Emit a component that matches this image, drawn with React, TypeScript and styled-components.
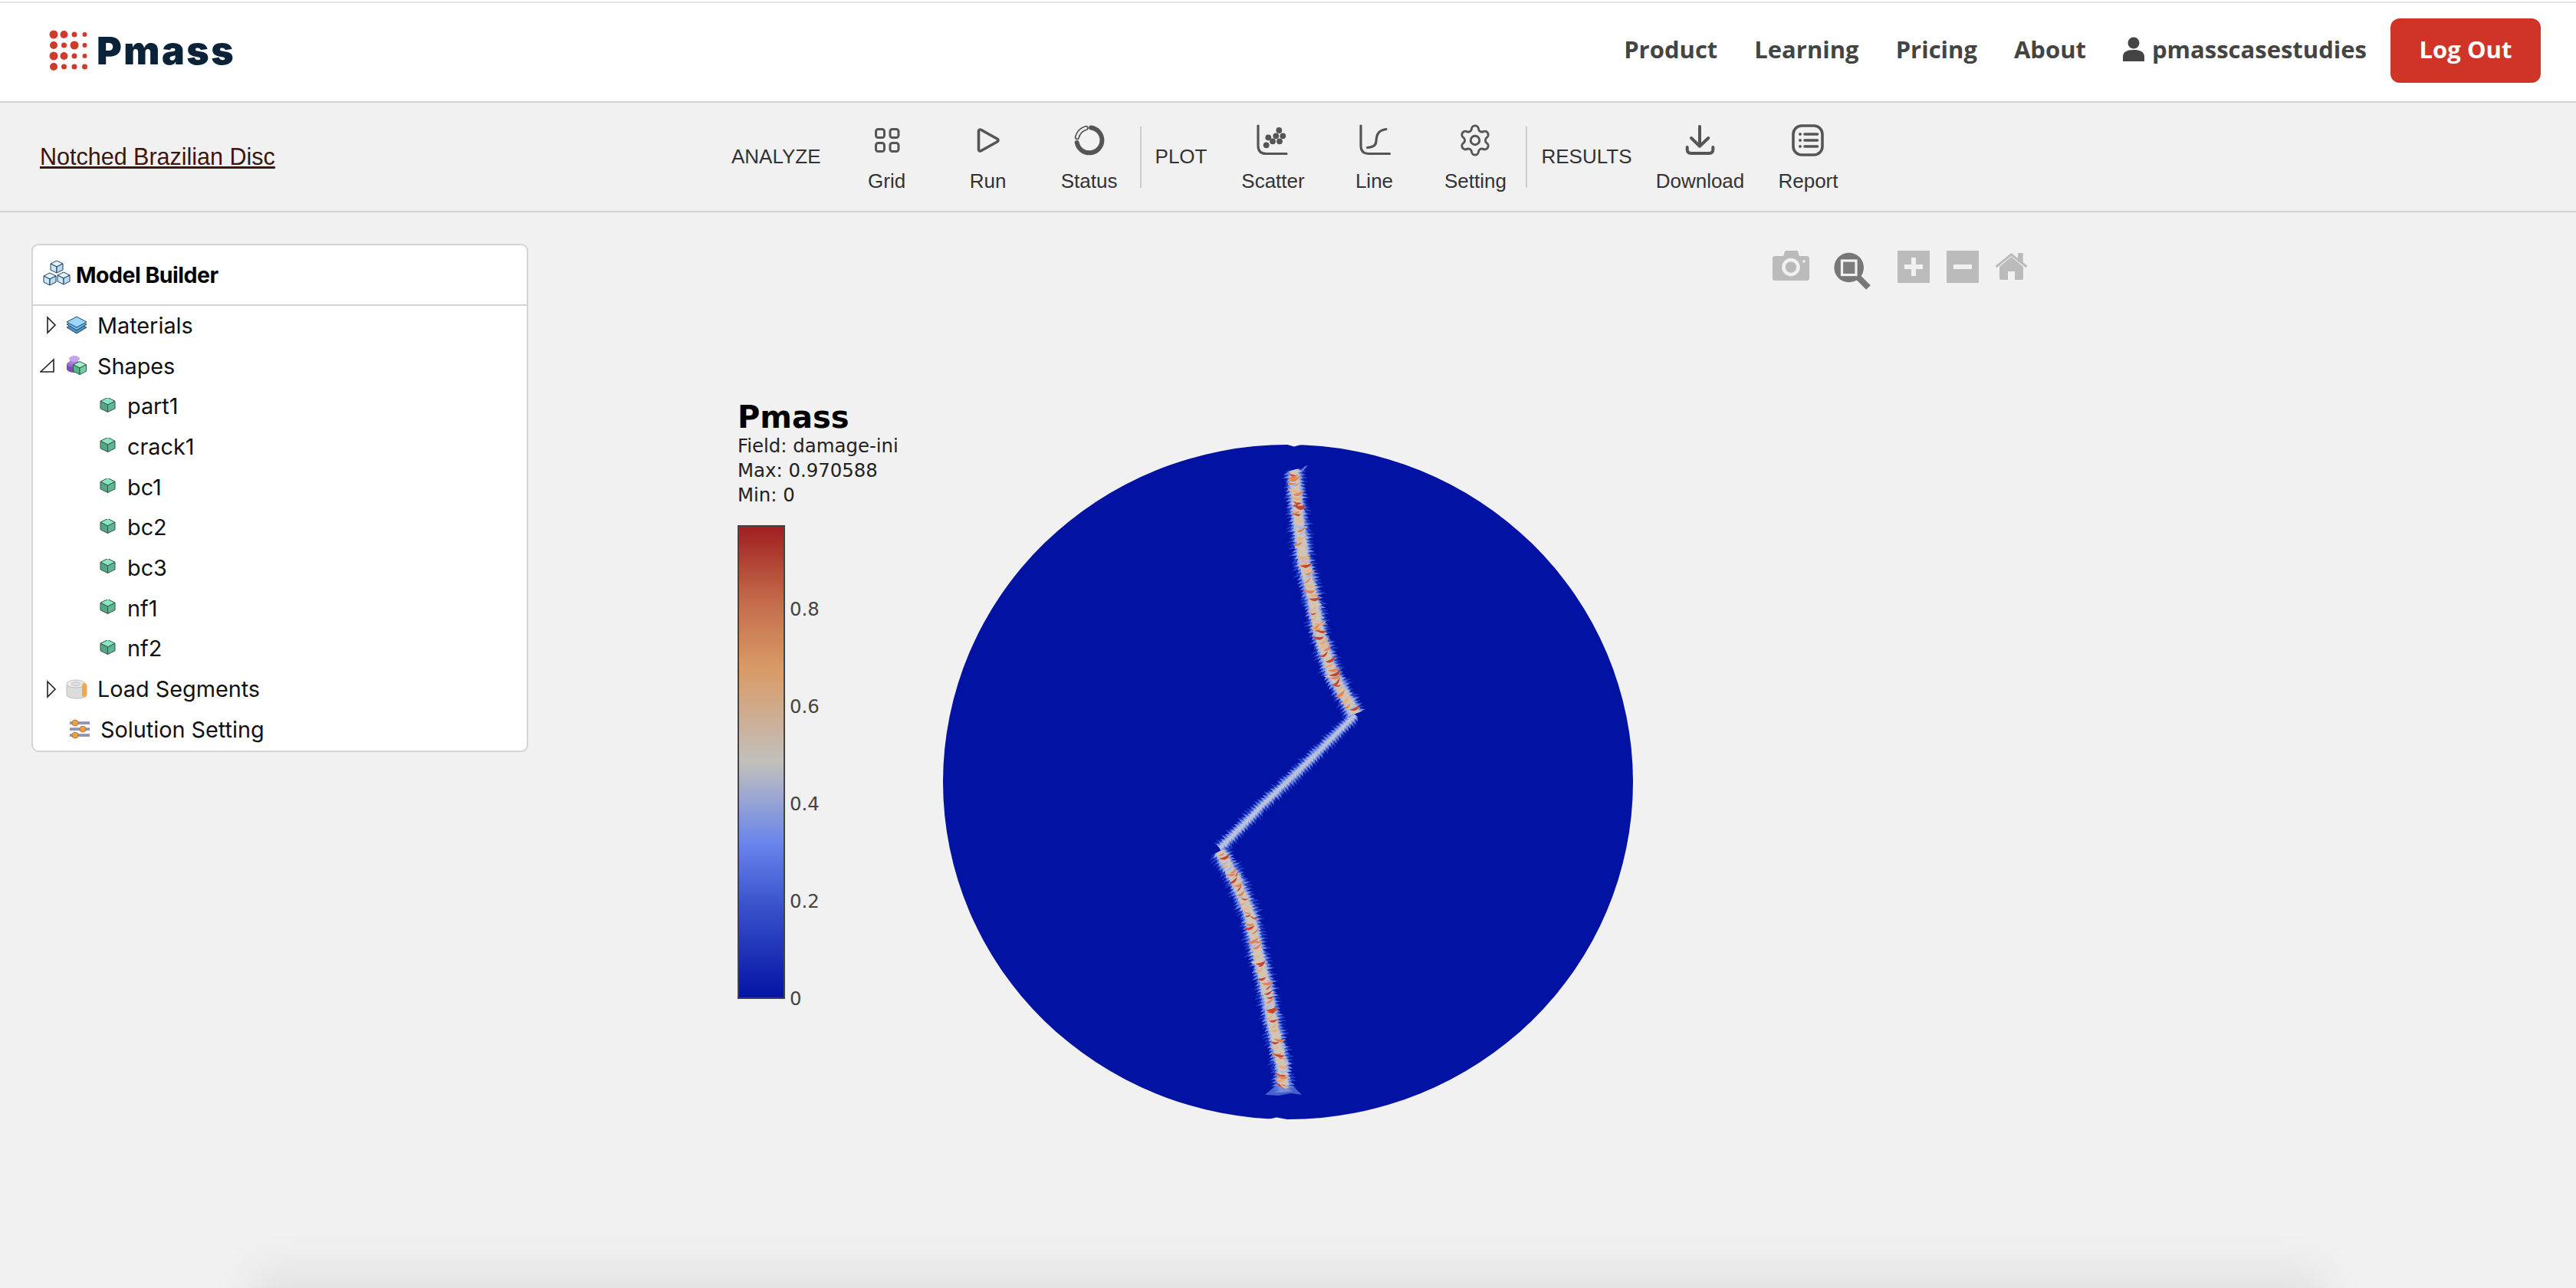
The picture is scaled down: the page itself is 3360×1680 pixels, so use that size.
import React from "react";
import styled, { createGlobalStyle } from "styled-components";
import { Settings } from "lucide-react";

const GlobalStyle = createGlobalStyle`
  html, body {
    margin: 0;
    padding: 0;
    background: #f1f1f1;
    overflow: hidden;
  }
`;

const Page = styled.div`
  min-height: 100vh;
  display: flex;
  flex-direction: column;
  padding-top: 2px;
  background: #f1f1f1;
  box-sizing: border-box;
  box-shadow: inset 0 2px 0 #fff;
`;

const Header = styled.header`
  height: 124px;
  border-top: 2px solid #e4e4e4;
  border-bottom: 2px solid #d2d2d2;
  background: #fff;
  display: flex;
  align-items: center;
  justify-content: space-between;
  padding: 0 46px 4px 64px;
`;

const Brand = styled.div`
  display: flex;
  align-items: center;
  gap: 12px;
`;

const BrandName = styled.span`
  font-family: Inter, sans-serif;
  font-weight: 900;
  font-size: 50px;
  letter-spacing: 2.5px;
  color: #0b2338;
`;

const Nav = styled.nav`
  display: flex;
  align-items: center;
  gap: 48px;
  font-family: "Open Sans", sans-serif;
  font-weight: 700;
  font-size: 31px;
  color: #444;
`;

const NavLink = styled.span`
  padding-bottom: 4px;
`;

const UserLink = styled.span`
  display: flex;
  align-items: center;
  gap: 10px;
  padding-bottom: 4px;
`;

const LogOut = styled.button`
  width: 196px;
  height: 84px;
  margin-left: -17px;
  padding: 0 0 4px;
  border: none;
  border-radius: 12px;
  background: #d03427;
  color: #fff;
  font-family: "Open Sans", sans-serif;
  font-weight: 700;
  font-size: 31px;
`;

const Toolbar = styled.div`
  height: 141px;
  border-bottom: 2px solid #d2d2d2;
  display: flex;
  align-items: center;
  padding-left: 52px;
  font-family: "Liberation Sans", sans-serif;
`;

const ProjectTitle = styled.a`
  width: 902px;
  flex: none;
  font-size: 30.5px;
  color: #3d1410;
  text-decoration: underline;
`;

const SectionLabel = styled.span`
  font-size: 26px;
  color: #333;
  margin-right: 20px;
`;

const ToolItem = styled.div<{ $width?: number }>`
  width: ${(p) => p.$width ?? 132}px;
  display: flex;
  flex-direction: column;
  align-items: center;
  flex: none;
`;

const ToolIcon = styled.svg`
  display: block;
  width: 48px;
  height: 48px;
  fill: none;
  stroke: #555;
  stroke-linecap: round;
  stroke-linejoin: round;
`;

const GearSlot = styled.div`
  width: 48px;
  height: 48px;
  display: flex;
  align-items: center;
  justify-content: center;
  color: #555;
`;

const ToolLabel = styled.span`
  margin-top: 14px;
  font-size: 26px;
  line-height: 30px;
  color: #333;
`;

const Divider = styled.div`
  width: 2px;
  height: 80px;
  background: #cdcdcd;
  margin-right: 18px;
`;

const Main = styled.main`
  flex: 1;
  display: flex;
  align-items: flex-start;
  padding: 41px 0 0 41px;
`;

const Panel = styled.aside`
  width: 648px;
  flex: none;
  box-sizing: border-box;
  border: 2px solid #d4d4d4;
  border-radius: 9px;
  background: #fff;
  font-family: Inter, sans-serif;
`;

const PanelHeader = styled.div`
  height: 77px;
  border-bottom: 2px solid #d4d4d4;
  display: flex;
  align-items: center;
  gap: 6px;
  padding-left: 13px;
  font-weight: 700;
  font-size: 28.5px;
  letter-spacing: -0.5px;
  color: #000;
`;

const TreeRow = styled.div<{ $indent: number; $gap: number }>`
  height: 52.7px;
  box-sizing: border-box;
  padding-bottom: 2px;
  display: flex;
  align-items: center;
  gap: ${(p) => p.$gap}px;
  padding-left: ${(p) => p.$indent}px;
  font-size: 28.8px;
  color: #111;
`;

const Caret = styled.svg`
  display: block;
  width: 22px;
  height: 24px;
  margin-right: -1px;
  flex: none;
`;

const PlotArea = styled.section`
  position: relative;
  flex: 1;
  display: flex;
  align-items: flex-start;
  padding-left: 273px;
`;

const Modebar = styled.div`
  position: absolute;
  top: 9px;
  left: 1623px;
  display: flex;
  align-items: flex-start;
`;

const ModeSlot = styled.div<{ $gap: number; $drop?: number }>`
  margin-left: ${(p) => p.$gap}px;
  margin-top: ${(p) => p.$drop ?? 0}px;
  display: flex;
`;

const Legend = styled.div`
  width: 266px;
  flex: none;
  margin-top: 204px;
  font-family: "DejaVu Sans", sans-serif;
`;

const LegendTitle = styled.div`
  font-weight: 700;
  font-size: 40px;
  line-height: 44px;
  color: #000;
`;

const LegendLine = styled.div`
  font-size: 24.4px;
  line-height: 32px;
  color: #222;
`;

const Scale = styled.div`
  display: flex;
  margin-top: 22.5px;
  gap: 6px;
`;

const ColorBar = styled.div`
  width: 62px;
  height: 618px;
  box-sizing: border-box;
  border: 2px solid #444;
  background: linear-gradient(
    to top,
    #0414a4 0%,
    #3a54cc 20%,
    #6a86ec 33%,
    #c2c0bc 50%,
    #d99a66 70%,
    #c46c4c 84%,
    #a01f20 100%
  );
`;

const Ticks = styled.div`
  padding-top: 46px;
  height: 508px;
`;

const Tick = styled.div`
  height: 127px;
  display: flex;
  align-items: center;
  font-size: 24.4px;
  color: #444;
`;

const Disc = styled.svg`
  display: block;
  flex: none;
  width: 904px;
  height: 884px;
  margin-top: 260px;
`;

const BottomShade = styled.div`
  position: fixed;
  left: 350px;
  right: 350px;
  bottom: -40px;
  height: 40px;
  box-shadow: 0 0 60px 22px rgba(0, 0, 0, 0.07);
`;

// logo dots: radius per column, row by row
const LOGO_R = [
  [5.5, 5, 3.5, 3],
  [5, 3.5, 5.5, 3],
  [5.5, 5, 3.5, 3],
  [5, 3.5, 3.5, 3.5],
];

const Logo = () => (
  <svg width="50" height="54" viewBox="0 0 50 54">
    {LOGO_R.map((row, r) =>
      row.map((rad, c) => (
        <circle key={`${r}-${c}`} cx={6 + c * 13.5} cy={6 + r * 14} r={rad} fill="#d03a2a" />
      ))
    )}
  </svg>
);

const GridIcon = () => (
  <ToolIcon viewBox="0 0 48 48" strokeWidth={3}>
    <rect x="9.5" y="9.5" width="11" height="11" rx="3" />
    <rect x="28" y="9.5" width="11" height="11" rx="3" />
    <rect x="9.5" y="27.5" width="11" height="11" rx="3" />
    <rect x="28" y="27.5" width="11" height="11" rx="3" />
  </ToolIcon>
);

const RunIcon = () => (
  <ToolIcon viewBox="0 0 48 48" strokeWidth={3.6}>
    <path d="M11.5 12c0-1.6 1.6-2.5 3-1.7l21.5 12c1.3.8 1.3 2.6 0 3.4l-21.5 12c-1.4.8-3-.1-3-1.7z" />
  </ToolIcon>
);

const StatusIcon = () => (
  <ToolIcon viewBox="0 0 48 48">
    <path d="M26 7.5A16.5 16.5 0 1 1 7.7 27" strokeWidth={6} />
    <path d="M8 20A16.5 16.5 0 0 1 19.5 8" strokeWidth={6.5} />
    <path d="M8 20A16.5 16.5 0 0 1 19.5 8" strokeWidth={3} stroke="#f1f1f1" />
  </ToolIcon>
);

const ScatterIcon = () => (
  <ToolIcon viewBox="0 0 48 48" strokeWidth={3.2}>
    <path d="M5 5V31Q5 41.5 15.5 41.5H42" />
    {[
      [32.3, 11],
      [18.3, 20.3],
      [28.3, 18.3],
      [37.3, 18.3],
      [24, 25.3],
      [33, 25.3],
      [15.7, 30.3],
    ].map(([cx, cy]) => (
      <circle key={`${cx}-${cy}`} cx={cx} cy={cy} r="3.9" fill="#555" stroke="none" />
    ))}
  </ToolIcon>
);

const LineIcon = () => (
  <ToolIcon viewBox="0 0 48 48" strokeWidth={3.2}>
    <path d="M7 5V31Q7 41.5 17.5 41.5H44.5" />
    <path d="M15.5 33.5C23 33 26.5 31 27 25C27.5 16 30 11 40 9.5" />
  </ToolIcon>
);

const DownloadIcon = () => (
  <ToolIcon viewBox="0 0 48 48" strokeWidth={4}>
    <path d="M24 6V31M13 21L24 31.7L35.3 21" />
    <path d="M7.7 33V36Q7.7 41 13 41H36.3Q41.3 41 41.3 36V33" />
  </ToolIcon>
);

const ReportIcon = () => (
  <ToolIcon viewBox="0 0 48 48" strokeWidth={3.6}>
    <rect x="5" y="5" width="38" height="38" rx="11" />
    <path d="M20 16H36.5M20 24H36.5M20 32H36.5" />
    <circle cx="14" cy="16" r="1.7" fill="#555" strokeWidth={0.5} />
    <circle cx="14" cy="24" r="1.7" fill="#555" strokeWidth={0.5} />
    <circle cx="14" cy="32" r="1.7" fill="#555" strokeWidth={0.5} />
  </ToolIcon>
);

const UserIcon = () => (
  <svg width="28" height="32" viewBox="0 0 28 32">
    <circle cx="14" cy="8" r="7.5" fill="#444" />
    <path d="M0 32V26C0 20 5 17 14 17S28 20 28 26V32Z" fill="#444" />
  </svg>
);

const CaretRight = () => (
  <Caret viewBox="0 0 22 24">
    <path d="M10 2L20 12L10 22Z" fill="none" stroke="#222" strokeWidth="1.6" />
  </Caret>
);

const CaretOpen = () => (
  <Caret viewBox="0 0 22 24">
    <path d="M1 20H18V4Z" fill="none" stroke="#222" strokeWidth="1.6" />
  </Caret>
);

// one isometric cube drawn around (x, y)
const IsoCube = ({ x, y, s, top, left, right, stroke }: { x: number; y: number; s: number; top: string; left: string; right: string; stroke: string }) => (
  <g strokeLinejoin="round" stroke={stroke} strokeWidth={1}>
    <path d={`M${x} ${y - s}L${x + s} ${y - s / 2}L${x} ${y}L${x - s} ${y - s / 2}Z`} fill={top} />
    <path d={`M${x - s} ${y - s / 2}L${x} ${y}V${y + s}L${x - s} ${y + s / 2}Z`} fill={left} />
    <path d={`M${x + s} ${y - s / 2}L${x} ${y}V${y + s}L${x + s} ${y + s / 2}Z`} fill={right} />
  </g>
);

const BuilderIcon = () => (
  <svg width="37" height="37" viewBox="0 0 37 37">
    <IsoCube x={18} y={8} s={8} top="#e3f3fc" left="#cbe7f8" right="#b5dcf4" stroke="#1d3d56" />
    <IsoCube x={9} y={24} s={8} top="#e3f3fc" left="#cbe7f8" right="#b5dcf4" stroke="#1d3d56" />
    <IsoCube x={27} y={23} s={8} top="#e3f3fc" left="#cbe7f8" right="#b5dcf4" stroke="#1d3d56" />
  </svg>
);

const ItemCube = () => (
  <svg width="21" height="22" viewBox="0 0 21 22">
    <IsoCube x={10.5} y={9} s={9.5} top="#86e6bf" left="#50a985" right="#5cb892" stroke="#37524a" />
  </svg>
);

const MaterialsIcon = () => (
  <svg width="28" height="24" viewBox="0 0 28 24">
    <path d="M14 9L27 15L14 23L1 15Z" fill="#4d93c9" stroke="#22475f" />
    <path d="M14 5L27 11L14 19L1 11Z" fill="#69b4e4" stroke="#22475f" />
    <path d="M14 1L27 8L14 15L1 8Z" fill="#9ad6fb" stroke="#22475f" />
  </svg>
);

const ShapesIcon = () => (
  <svg width="28" height="28" viewBox="0 0 28 28">
    <ellipse cx="10" cy="18" rx="9" ry="5" fill="#7b4bb0" />
    <rect x="1" y="12" width="18" height="7" fill="#7b4bb0" />
    <ellipse cx="10" cy="12" rx="9" ry="4" fill="#9a6ccc" />
    <rect x="5" y="5" width="11" height="7" fill="#a981d6" />
    <ellipse cx="11" cy="5" rx="7" ry="4" fill="#c4a4e8" />
    <IsoCube x={18} y={17} s={8.5} top="#a8efcb" left="#52b886" right="#6fd09f" stroke="#2f5a48" />
  </svg>
);

const LoadIcon = () => (
  <svg width="28" height="26" viewBox="0 0 28 26">
    <path d="M1 8V20C1 23 8 25 14 25S27 23 27 20V8Z" fill="#dcdcdc" stroke="#bbb" />
    <ellipse cx="13" cy="6" rx="12" ry="5" fill="#eee" stroke="#bbb" />
    <ellipse cx="13" cy="6" rx="6" ry="2.5" fill="#ddd" stroke="#c4c4c4" />
    <rect x="21" y="5" width="6" height="18" rx="3" fill="#f0a850" />
  </svg>
);

const SliderIcon = () => (
  <svg width="26" height="26" viewBox="0 0 26 26">
    <path d="M0 5H26M0 13H26M0 21H26" stroke="#3b3f7a" strokeWidth="3" />
    <path d="M0 5H26M0 13H26M0 21H26" stroke="#e4e6f4" strokeWidth="1.2" />
    <circle cx="7" cy="5" r="4" fill="#f0a040" stroke="#8a5a20" strokeWidth="0.6" />
    <circle cx="17" cy="13" r="4" fill="#f0a040" stroke="#8a5a20" strokeWidth="0.6" />
    <circle cx="7" cy="21" r="4" fill="#f0a040" stroke="#8a5a20" strokeWidth="0.6" />
  </svg>
);

const CameraIcon = () => (
  <svg width="48" height="40" viewBox="0 0 48 40">
    <path d="M14 7L16 1Q16.5 0 18 0H31Q32.5 0 33 1L35 7H45Q48 7 48 10V36Q48 39 45 39H3Q0 39 0 36V10Q0 7 3 7Z" fill="#bbb" />
    <circle cx="24" cy="21.5" r="9.5" fill="#bbb" stroke="#f1f1f1" strokeWidth="4.5" />
    <circle cx="41" cy="14" r="1.8" fill="#f1f1f1" />
  </svg>
);

const ZoomIcon = () => (
  <svg width="50" height="50" viewBox="0 0 50 50">
    <path d="M33 33L46 46" stroke="#777" strokeWidth="8" />
    <circle cx="20.7" cy="20" r="19.3" fill="#777" />
    <rect x="11.5" y="11" width="18.5" height="18.5" fill="#7c7c7c" stroke="#f1f1f1" strokeWidth="3.2" />
  </svg>
);

const SquareIcon = ({ plus }: { plus?: boolean }) => (
  <svg width="42" height="42" viewBox="0 0 42 42">
    <rect width="42" height="42" fill="#bbb" />
    <rect x="9" y="18" width="24" height="6" fill="#f1f1f1" />
    {plus && <rect x="18" y="9" width="6" height="24" fill="#f1f1f1" />}
  </svg>
);

const HomeIcon = () => (
  <svg width="43" height="36" viewBox="0 0 43 36">
    <path d="M30 0H36.7V12H30Z" fill="#bbb" />
    <path d="M6 18L21.5 5L37 18V33Q37 35 35 35H26V24H17V35H8Q6 35 6 33Z" fill="#bbb" />
    <path d="M1.5 18L21.5 2L41.5 18" fill="none" stroke="#bbb" strokeWidth="3" />
  </svg>
);

// ---- crack field, sampled from a small seeded generator ----
const rng = (() => {
  let a = 90211;
  return () => {
    a = (a + 0x6d2b79f5) | 0;
    let t = Math.imul(a ^ (a >>> 15), 1 | a);
    t = (t + Math.imul(t ^ (t >>> 7), 61 | t)) ^ t;
    return ((t ^ (t >>> 14)) >>> 0) / 4294967296;
  };
})();

type Pt = [number, number];
type Sample = { x: number; y: number; nx: number; ny: number };

const UPPER: Pt[] = [[1688, 612], [1690, 640], [1693, 670], [1700, 730], [1712, 780], [1720, 823], [1737, 877], [1768, 932]];
const LINK: Pt[] = [[1768, 932], [1720, 980], [1687, 1012], [1647, 1050], [1590, 1108]];
const LOWER: Pt[] = [[1590, 1108], [1613, 1150], [1630, 1193], [1640, 1240], [1652, 1290], [1662, 1343], [1672, 1390], [1675, 1424]];

const sample = (pts: Pt[], step: number): Sample[] => {
  const out: Sample[] = [];
  for (let i = 0; i < pts.length - 1; i++) {
    const [x0, y0] = pts[i];
    const [x1, y1] = pts[i + 1];
    const len = Math.hypot(x1 - x0, y1 - y0);
    const n = Math.max(1, Math.round(len / step));
    for (let k = 0; k < n; k++) {
      const t = k / n;
      out.push({ x: x0 + (x1 - x0) * t, y: y0 + (y1 - y0) * t, nx: -(y1 - y0) / len, ny: (x1 - x0) / len });
    }
  }
  return out;
};

const band = (s: Sample[], outer: number, inner: number) => {
  const side = (sign: number, list: Sample[]) =>
    list.map((p, i) => {
      const spike = i % 2 === 0;
      const w = (spike ? outer : inner) * (0.8 + rng() * 0.4);
      const skew = spike ? 2.5 : 0;
      const x = p.x + sign * p.nx * w + p.ny * skew;
      const y = p.y + sign * p.ny * w - p.nx * skew;
      return `${x.toFixed(1)} ${y.toFixed(1)}`;
    });
  return "M" + [...side(1, s), ...side(-1, [...s].reverse())].join("L") + "Z";
};

const crescent = (p: Sample, size: number, tilt: number) => {
  const tx = p.ny;
  const ty = -p.nx;
  const side = rng() > 0.5 ? 1 : -1;
  const off = (rng() - 0.5) * 9;
  const cx = p.x + p.nx * off;
  const cy = p.y + p.ny * off;
  const ax = p.nx * side * size + tx * tilt;
  const ay = p.ny * side * size + ty * tilt;
  const bx = tx * size * 1.2;
  const by = ty * size * 1.2;
  const x0 = cx - ax;
  const y0 = cy - ay;
  const x1 = cx + ax;
  const y1 = cy + ay;
  return `M${x0.toFixed(1)} ${y0.toFixed(1)}Q${(cx + bx).toFixed(1)} ${(cy + by).toFixed(1)} ${x1.toFixed(1)} ${y1.toFixed(1)}Q${(cx + bx * 0.2).toFixed(1)} ${(cy + by * 0.2).toFixed(1)} ${x0.toFixed(1)} ${y0.toFixed(1)}Z`;
};

const HOT = ["#e9a877", "#e9a877", "#e8b48c", "#dd8458", "#dd8458", "#c4452f", "#c4452f", "#a9b8e8", "#d9c4ae"];

const upper = sample(UPPER, 2.2);
const lower = sample(LOWER, 2.2);
const link = sample(LINK, 2.2);

const HALOS = [upper, lower].flatMap((s) => [
  { d: band(s, 16, 9), fill: "#2442c6" },
  { d: band(s, 12.5, 7), fill: "#6f89e4" },
  { d: band(s, 9, 6), fill: "#aab4e0" },
  { d: band(s, 6.5, 4.5), fill: "#cfc4b6" },
]);

const LINK_HALOS = [
  { d: band(link, 11, 5), fill: "#2442c6" },
  { d: band(link, 8, 3.5), fill: "#6f89e4" },
  { d: band(link, 4.5, 1.5), fill: "#b9c0dc" },
];

const PETALS = [upper, lower].flatMap((s) => {
  const out: { d: string; fill: string }[] = [];
  for (let i = 3; i < s.length - 2; i += 1 + Math.floor(rng() * 3)) {
    const fill = HOT[Math.floor(rng() * HOT.length)];
    out.push({ d: crescent(s[i], 4 + rng() * 4.5, (rng() - 0.5) * 6), fill });
  }
  return out;
});

const CrackField = () => (
  <g filter="url(#soften)">
    {LINK_HALOS.map((h) => (
      <path key={h.fill} d={h.d} fill={h.fill} />
    ))}
    {HALOS.map((h, i) => (
      <path key={i} d={h.d} fill={h.fill} />
    ))}
    <path d="M1694 616L1702 608L1706 607L1700 614Z" fill="#7d95e8" opacity="0.7" />
    <path d="M1650 1428L1664 1416H1686L1698 1428L1684 1426L1668 1429Z" fill="#5b78de" opacity="0.75" />
    {PETALS.map((p, i) => (
      <path key={i} d={p.d} fill={p.fill} />
    ))}
  </g>
);

const SCALE_TICKS = ["0.8", "0.6", "0.4", "0.2", "0"];
const LEAVES = ["part1", "crack1", "bc1", "bc2", "bc3", "nf1", "nf2"];

export default function App() {
  return (
    <Page>
      <GlobalStyle />
      <Header>
        <Brand>
          <Logo />
          <BrandName>Pmass</BrandName>
        </Brand>
        <Nav>
          <NavLink>Product</NavLink>
          <NavLink>Learning</NavLink>
          <NavLink>Pricing</NavLink>
          <NavLink>About</NavLink>
          <UserLink>
            <UserIcon />
            pmasscasestudies
          </UserLink>
          <LogOut>Log Out</LogOut>
        </Nav>
      </Header>

      <Toolbar>
        <ProjectTitle>Notched Brazilian Disc</ProjectTitle>
        <SectionLabel>ANALYZE</SectionLabel>
        <ToolItem>
          <GridIcon />
          <ToolLabel>Grid</ToolLabel>
        </ToolItem>
        <ToolItem>
          <RunIcon />
          <ToolLabel>Run</ToolLabel>
        </ToolItem>
        <ToolItem>
          <StatusIcon />
          <ToolLabel>Status</ToolLabel>
        </ToolItem>
        <Divider />
        <SectionLabel>PLOT</SectionLabel>
        <ToolItem>
          <ScatterIcon />
          <ToolLabel>Scatter</ToolLabel>
        </ToolItem>
        <ToolItem>
          <LineIcon />
          <ToolLabel>Line</ToolLabel>
        </ToolItem>
        <ToolItem>
          <GearSlot>
            <Settings size={46} strokeWidth={1.5} />
          </GearSlot>
          <ToolLabel>Setting</ToolLabel>
        </ToolItem>
        <Divider />
        <SectionLabel>RESULTS</SectionLabel>
        <ToolItem $width={138}>
          <DownloadIcon />
          <ToolLabel>Download</ToolLabel>
        </ToolItem>
        <ToolItem $width={144}>
          <ReportIcon />
          <ToolLabel>Report</ToolLabel>
        </ToolItem>
      </Toolbar>

      <Main>
        <Panel>
          <PanelHeader>
            <BuilderIcon />
            Model Builder
          </PanelHeader>
          <TreeRow $indent={9} $gap={13}>
            <CaretRight />
            <MaterialsIcon />
            Materials
          </TreeRow>
          <TreeRow $indent={9} $gap={13}>
            <CaretOpen />
            <ShapesIcon />
            Shapes
          </TreeRow>
          {LEAVES.map((name) => (
            <TreeRow key={name} $indent={87} $gap={15}>
              <ItemCube />
              {name}
            </TreeRow>
          ))}
          <TreeRow $indent={9} $gap={13}>
            <CaretRight />
            <LoadIcon />
            Load Segments
          </TreeRow>
          <TreeRow $indent={48} $gap={14}>
            <SliderIcon />
            Solution Setting
          </TreeRow>
        </Panel>

        <PlotArea>
          <Modebar>
            <ModeSlot $gap={0}>
              <CameraIcon />
            </ModeSlot>
            <ModeSlot $gap={31} $drop={2}>
              <ZoomIcon />
            </ModeSlot>
            <ModeSlot $gap={34}>
              <SquareIcon plus />
            </ModeSlot>
            <ModeSlot $gap={22}>
              <SquareIcon />
            </ModeSlot>
            <ModeSlot $gap={21} $drop={3}>
              <HomeIcon />
            </ModeSlot>
          </Modebar>

          <Legend>
            <LegendTitle>Pmass</LegendTitle>
            <LegendLine>Field: damage-ini</LegendLine>
            <LegendLine>Max: 0.970588</LegendLine>
            <LegendLine>Min: 0</LegendLine>
            <Scale>
              <ColorBar />
              <Ticks>
                {SCALE_TICKS.map((t) => (
                  <Tick key={t}>{t}</Tick>
                ))}
              </Ticks>
            </Scale>
          </Legend>

          <Disc viewBox="1228 578 904 884">
            <defs>
              <filter id="soften" x="-5%" y="-5%" width="110%" height="110%">
                <feGaussianBlur stdDeviation="0.7" />
              </filter>
            </defs>
            <ellipse cx="1680" cy="1020" rx="450" ry="440" fill="#0212a2" />
            <path d="M1672 578L1688 582.5L1704 578Z" fill="#f1f1f1" />
            <path d="M1645 1462L1665 1457.5L1690 1462Z" fill="#f1f1f1" />
            <CrackField />
          </Disc>
        </PlotArea>
      </Main>
      <BottomShade />
    </Page>
  );
}
